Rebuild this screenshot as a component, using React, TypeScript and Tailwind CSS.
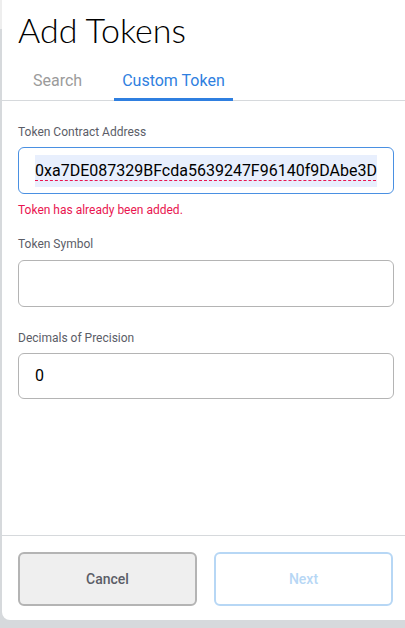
export default function App() {
  return (
    <div className="w-[405px] h-[628px] overflow-hidden bg-[#d6d9dc] pb-[8px] flex font-['Roboto',sans-serif]">
      <div className="w-[2px] shrink-0">
        <div className="h-[29px] bg-[#eeeeee]" />
      </div>
      <div className="w-[408px] shrink-0 bg-white rounded-bl-[8px] flex flex-col">
        <h1 className="h-[60px] pl-[16px] pt-[8px] text-[34px] leading-[44px] font-light text-black font-['Lato',sans-serif]">
          Add Tokens
        </h1>
        <div className="flex h-[41px] border-b border-[#d6d9dc] pl-[23px]">
          <div className="px-[8px] pt-[1px] flex items-center text-[16px] text-[#9b9b9b]">Search</div>
          <div className="ml-[24px] px-[8px] flex items-center text-[16px] text-[#2f7fe0] border-b-[3px] border-[#2f7fe0] pt-[4px] mb-[-1px]">
            Custom Token
          </div>
        </div>

        <div className="flex-1 px-[16px] pt-[21px]">
          <label className="block text-[12px] leading-[20px] text-[#5b5d67]">Token Contract Address</label>
          <div className="mt-[5px] h-[47px] rounded-[6px] border border-[#4a90e2] flex items-center pl-[16px] pr-[16px] overflow-hidden">
            <span className="bg-[#e8effd] h-[32px] flex items-center text-[16px] text-black whitespace-nowrap underline decoration-dashed decoration-[#e91550] decoration-1 underline-offset-[4px]">
              0xa7DE087329BFcda5639247F96140f9DAbe3D
            </span>
          </div>
          <div className="mt-[6px] text-[12px] leading-[20px] text-[#e91550]">Token has already been added.</div>

          <label className="block mt-[14px] text-[12px] leading-[20px] text-[#5b5d67]">Token Symbol</label>
          <div className="mt-[6px] h-[47px] rounded-[6px] border-[1.5px] border-[#b4b4b4]" />

          <label className="block mt-[21px] text-[12px] leading-[20px] text-[#5b5d67]">Decimals of Precision</label>
          <div className="mt-[5px] h-[46px] rounded-[6px] border-[1.5px] border-[#b4b4b4] flex items-center pl-[16px] text-[16px] text-black">
            0
          </div>
        </div>

        <div className="h-[85px] border-t border-[#d6d9dc] pl-[16px] pt-[16px] flex gap-[17px]">
          <button className="w-[179px] h-[54px] rounded-[6px] bg-[#efefef] border-2 border-[#b4b4b4] text-[14px] font-medium text-[#5b5d67]">
            Cancel
          </button>
          <button className="w-[179px] h-[54px] rounded-[6px] bg-white border-2 border-[#b7d7f5] text-[14px] font-medium text-[#b7d7f5]">
            Next
          </button>
        </div>
      </div>
    </div>
  );
}
